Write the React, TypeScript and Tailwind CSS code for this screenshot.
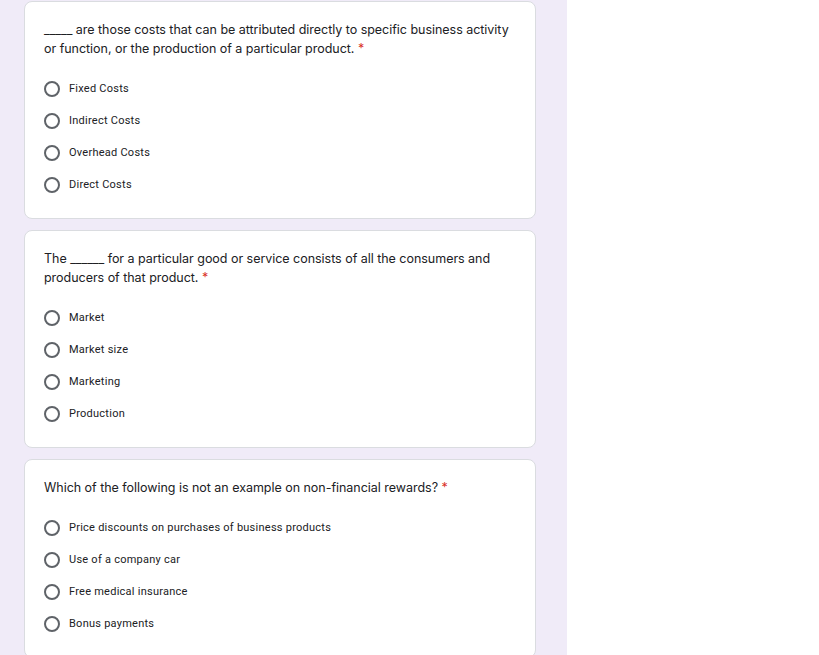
import React from 'react';

type Question = {
  id: string;
  lines: React.ReactNode;
  options: string[];
};

const questions: Question[] = [
  {
    id: 'q1',
    lines: (
      <>
        _____ are those costs that can be attributed directly to specific business activity
        <br />
        or function, or the production of a particular product.
      </>
    ),
    options: ['Fixed Costs', 'Indirect Costs', 'Overhead Costs', 'Direct Costs'],
  },
  {
    id: 'q2',
    lines: (
      <>
        The ______ for a particular good or service consists of all the consumers and
        <br />
        producers of that product.
      </>
    ),
    options: ['Market', 'Market size', 'Marketing', 'Production'],
  },
  {
    id: 'q3',
    lines: <>Which of the following is not an example on non-financial rewards?</>,
    options: [
      'Price discounts on purchases of business products',
      'Use of a company car',
      'Free medical insurance',
      'Bonus payments',
    ],
  },
];

function Radio() {
  return (
    <span className="box-border block h-[16px] w-[16px] shrink-0 rounded-full border-2 border-[#5f6368]" />
  );
}

function QuestionCard({ q }: { q: Question }) {
  return (
    <div className="rounded-lg border border-[#dadce0] bg-white pb-[25px] pl-[19px] pr-5 pt-[18px]">
      <p className="font-['Inter',sans-serif] text-[12.5px] leading-[19px] tracking-[-0.03px] text-[#202124]">
        {q.lines}
        <span className="text-[#d93025]"> *</span>
      </p>
      <div className="mt-[23px] flex flex-col gap-[16px]">
        {q.options.map((opt) => (
          <label key={opt} className="flex h-[16px] items-center gap-[9px]">
            <Radio />
            <span className="font-['Roboto',sans-serif] text-[11px] tracking-[0.25px] text-[#202124]">
              {opt}
            </span>
          </label>
        ))}
      </div>
    </div>
  );
}

export default function App() {
  return (
    <div className="flex h-[655px] w-[819px] overflow-hidden bg-white">
      <div className="w-[567px] shrink-0 bg-[#f0ebf8] pl-6 pr-[31px] pt-[1px]">
        <div className="flex flex-col gap-[11px]">
          {questions.map((q) => (
            <QuestionCard key={q.id} q={q} />
          ))}
        </div>
      </div>
      <div className="flex-1 bg-white" />
    </div>
  );
}
